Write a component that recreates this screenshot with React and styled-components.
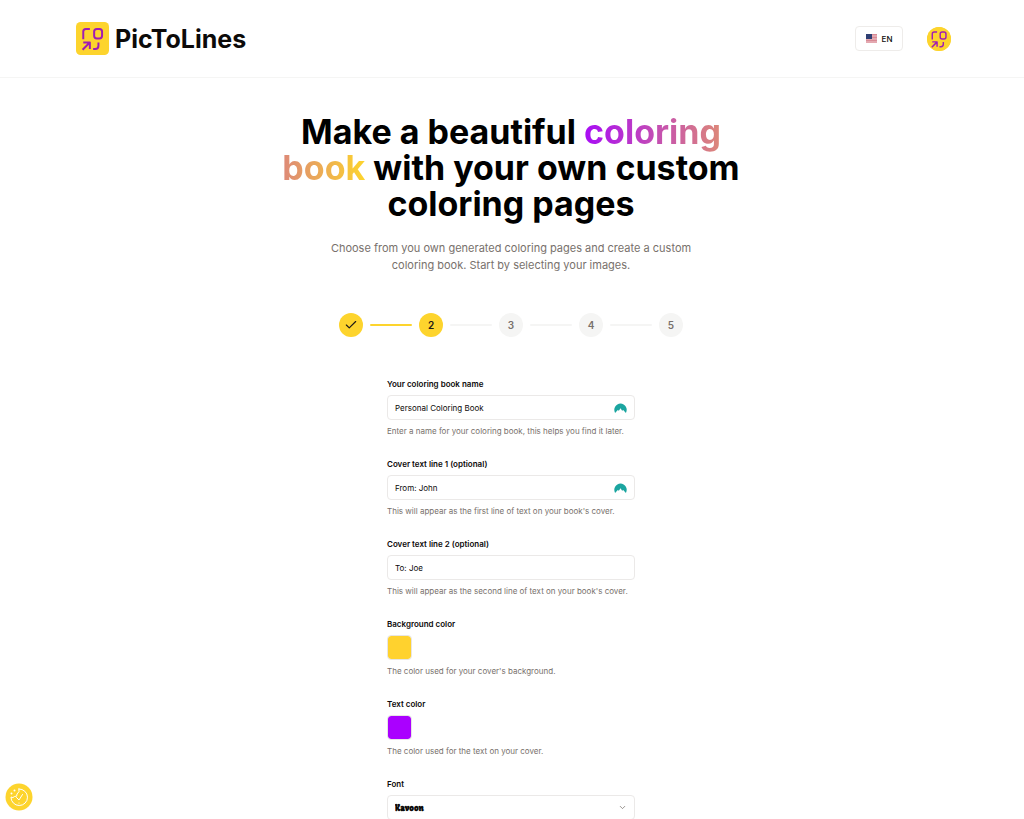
import React, { useState } from 'react'
import styled, { createGlobalStyle } from 'styled-components'
import { Check, ChevronDown } from 'lucide-react'

const GlobalStyle = createGlobalStyle`
  * {
    box-sizing: border-box;
  }
  body {
    margin: 0;
    background: #fff;
    color: #0c0a09;
    font-family: Inter, 'Liberation Sans', sans-serif;
  }
  button, input, select {
    font-family: inherit;
    color: inherit;
  }
`

const Header = styled.header`
  display: flex;
  align-items: center;
  justify-content: space-between;
  height: 78px;
  padding: 0 73px 0 76px;
  border-bottom: 1px solid #f5f5f4;
`

const Brand = styled.a`
  display: flex;
  align-items: center;
  gap: 6px;
  color: #0c0a09;
  font-size: 25px;
  font-weight: 700;
  line-height: 34px;
  text-decoration: none;
`

const Actions = styled.div`
  display: flex;
  align-items: center;
  gap: 24px;
`

const LanguageButton = styled.button`
  display: flex;
  align-items: center;
  justify-content: center;
  gap: 5px;
  width: 48px;
  height: 25px;
  padding: 0;
  background: #fff;
  border: 1px solid #eeecea;
  border-radius: 4px;
  font-size: 8px;
  font-weight: 500;
`

const AvatarButton = styled.button`
  display: flex;
  width: 24px;
  height: 24px;
  padding: 0;
  overflow: hidden;
  background: #fdd42d;
  border: 0;
  border-radius: 50%;
`

const Main = styled.main`
  display: flex;
  flex-direction: column;
  align-items: center;
  padding: 36px 26px 0 24px;
`

const Title = styled.h1`
  max-width: 480px;
  margin: 0;
  color: #000;
  font-size: 34px;
  font-weight: 700;
  line-height: 36px;
  text-align: center;
`

const Highlight = styled.span`
  background: linear-gradient(to right, #a80cf5, #fdd42d);
  background-clip: text;
  -webkit-background-clip: text;
  color: transparent;
`

const Intro = styled.p`
  max-width: 390px;
  margin: 18px 0 0;
  color: #78716c;
  font-size: 11px;
  line-height: 17px;
  text-align: center;
`

const Steps = styled.ol`
  display: flex;
  align-items: center;
  gap: 7px;
  margin: 39px 0 0;
  padding: 0;
  list-style: none;
`

const Step = styled.li`
  display: flex;
  align-items: center;
  gap: 7px;
`

const StepCircle = styled.span`
  display: flex;
  align-items: center;
  justify-content: center;
  width: 24px;
  height: 24px;
  border-radius: 50%;
  background: ${({ $active }) => ($active ? '#fdd42d' : '#f5f5f4')};
  color: ${({ $active }) => ($active ? '#1c1917' : '#78716c')};
  font-size: 10px;
  font-weight: 600;
`

const StepLine = styled.span`
  width: 42px;
  height: 2px;
  border-radius: 1px;
  background: ${({ $done }) => ($done ? '#fdd42d' : '#f5f5f4')};
`

const Form = styled.form`
  display: flex;
  flex-direction: column;
  gap: 21px;
  width: 100%;
  max-width: 248px;
  margin-top: 41px;
`

const Field = styled.div`
  display: flex;
  flex-direction: column;
  gap: 5px;
`

const Label = styled.label`
  font-size: 8px;
  font-weight: 600;
  line-height: 12px;
`

const Control = styled.div`
  display: flex;
  align-items: center;
  height: 25px;
  padding-right: 7px;
  border: 1px solid #ebe9e8;
  border-radius: 4px;
`

const TextInput = styled.input`
  flex: 1;
  min-width: 0;
  height: 100%;
  padding: 0 7px;
  background: transparent;
  border: 0;
  outline: 0;
  font-size: 8px;
`

const Select = styled.select`
  flex: 1;
  height: 100%;
  padding: 0 7px;
  appearance: none;
  background: transparent;
  border: 0;
  outline: 0;
  font-family: Kavoon, 'DejaVu Serif', serif;
  font-size: 8px;
  font-weight: 700;
`

const Swatch = styled.input`
  width: 25px;
  height: 25px;
  padding: 0;
  appearance: none;
  background: none;
  border: 1px solid #e7e5e4;
  border-radius: 4px;
  overflow: hidden;
  &::-webkit-color-swatch-wrapper {
    padding: 0;
  }
  &::-webkit-color-swatch {
    border: 0;
    border-radius: 3px;
  }
`

const Hint = styled.p`
  margin: 0;
  color: #78716c;
  font-size: 8px;
  line-height: 12px;
`

const CookieButton = styled.button`
  position: fixed;
  left: 5px;
  bottom: 8px;
  display: flex;
  width: 28px;
  height: 28px;
  padding: 0;
  background: none;
  border: 0;
`

const Mark = ({ size, radius }) => (
  <svg width={size} height={size} viewBox="0 0 100 100" aria-hidden="true">
    <rect width="100" height="100" rx={radius} fill="#fdd42d" />
    <g fill="none" stroke="#a01cb4" strokeWidth="6" strokeLinejoin="round">
      <path d="M22 52V29Q22 21 30 21H42" />
      <rect x="55" y="21" width="24" height="29" rx="8" />
      <path d="M20 84L41 63M22 62H42V82" />
      <path d="M68 62V72Q68 82 58 82H52" />
    </g>
  </svg>
)

const Flag = () => (
  <svg width="11" height="9" viewBox="0 0 22 18" aria-hidden="true">
    <rect width="22" height="18" fill="#f0c9ce" />
    <path d="M0 1H22M0 4H22M0 7H22M0 10H22M0 13H22M0 16H22" stroke="#d07482" strokeWidth="1.5" />
    <rect width="12" height="10" fill="#2e3f73" />
  </svg>
)

const PasswordIcon = () => (
  <svg width="13" height="10" viewBox="0 0 24 18" aria-hidden="true">
    <path
      d="M2 18A11.5 11.5 0 1 1 22 18L17 12.5L15 14L12 9.5L9 14L7 12.5Z"
      fill="#1ba5a0"
    />
  </svg>
)

const CookieIcon = () => (
  <svg width="28" height="28" viewBox="0 0 56 56" fill="none" aria-hidden="true">
    <circle cx="28" cy="28" r="27" fill="#fdd42d" />
    <g stroke="#fff" strokeWidth="2" strokeLinecap="round" strokeLinejoin="round">
      <path d="M28 12A16.5 16.5 0 1 1 12 28Q16 31 19 27Q25 28 24 22Q30 18 28 12Z" />
      <path d="M23 29L28 34L35 23" />
    </g>
    <g fill="#fff">
      <circle cx="13" cy="21" r="2" />
      <circle cx="19" cy="15" r="2" />
      <circle cx="28" cy="40" r="1.2" />
    </g>
  </svg>
)

const TextField = ({ id, label, hint, value, manager }) => {
  const [text, setText] = useState(value)
  return (
    <Field>
      <Label htmlFor={id}>{label}</Label>
      <Control>
        <TextInput id={id} type="text" value={text} onChange={(e) => setText(e.target.value)} />
        {manager && <PasswordIcon />}
      </Control>
      <Hint>{hint}</Hint>
    </Field>
  )
}

const ColorField = ({ id, label, hint, value }) => (
  <Field>
    <Label htmlFor={id}>{label}</Label>
    <Swatch id={id} type="color" defaultValue={value} />
    <Hint>{hint}</Hint>
  </Field>
)

const CURRENT_STEP = 2
const steps = [1, 2, 3, 4, 5]

const App = () => (
  <>
    <GlobalStyle />
    <Header>
      <Brand href="/">
        <Mark size={33} radius={14} />
        PicToLines
      </Brand>
      <Actions>
        <LanguageButton type="button">
          <Flag />
          EN
        </LanguageButton>
        <AvatarButton type="button" aria-label="Account">
          <Mark size={24} radius={0} />
        </AvatarButton>
      </Actions>
    </Header>
    <Main>
      <Title>
        Make a beautiful <Highlight>coloring book</Highlight> with your own custom coloring pages
      </Title>
      <Intro>
        Choose from you own generated coloring pages and create a custom coloring book. Start by
        selecting your images.
      </Intro>
      <Steps>
        {steps.map((n) => (
          <Step key={n}>
            <StepCircle $active={n <= CURRENT_STEP}>
              {n < CURRENT_STEP ? <Check size={14} strokeWidth={2} /> : n}
            </StepCircle>
            {n < steps.length && <StepLine $done={n < CURRENT_STEP} />}
          </Step>
        ))}
      </Steps>
      <Form>
        <TextField
          id="name"
          label="Your coloring book name"
          value="Personal Coloring Book"
          hint="Enter a name for your coloring book, this helps you find it later."
          manager
        />
        <TextField
          id="line1"
          label="Cover text line 1 (optional)"
          value="From: John"
          hint="This will appear as the first line of text on your book's cover."
          manager
        />
        <TextField
          id="line2"
          label="Cover text line 2 (optional)"
          value="To: Joe"
          hint="This will appear as the second line of text on your book's cover."
        />
        <ColorField
          id="background"
          label="Background color"
          value="#ffd22e"
          hint="The color used for your cover's background."
        />
        <ColorField
          id="text"
          label="Text color"
          value="#aa00ff"
          hint="The color used for the text on your cover."
        />
        <Field>
          <Label htmlFor="font">Font</Label>
          <Control>
            <Select id="font" defaultValue="Kavoon">
              <option>Kavoon</option>
            </Select>
            <ChevronDown size={9} color="#78716c" aria-hidden="true" />
          </Control>
        </Field>
      </Form>
    </Main>
    <CookieButton type="button" aria-label="Cookie settings">
      <CookieIcon />
    </CookieButton>
  </>
)

export default App
